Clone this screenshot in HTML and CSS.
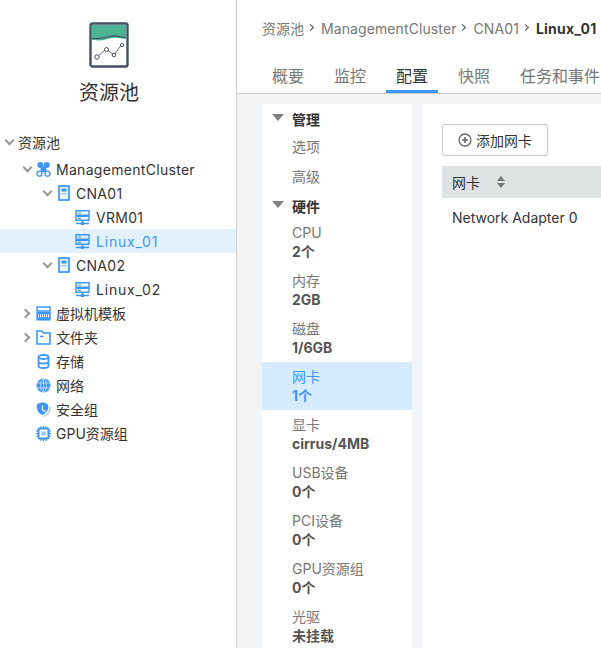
FILE: index.html
```html
<!DOCTYPE html>
<html lang="en">
<head>
  <meta charset="UTF-8">
  <title>资源池</title>
  <link rel="stylesheet" href="styles.css">
</head>
<body>
  <svg class="sprites" width="0" height="0">
    <symbol id="i-vm" viewBox="0 0 15 15"><path d="M1 .8h13v4.400H1zM1 6.300h13v3.900H1z" fill="none" stroke="#3d97fb" stroke-width="1.400"/><path d="M3 3h3M3 8.300h3" stroke="#3d97fb" stroke-width="1.200"/><path d="M7.500 10v3M1 13.500h5M9 13.500h5" stroke="#3d97fb" stroke-width="1.300" fill="none"/><rect x="6" y="12" width="3" height="3" fill="#3d97fb"/></symbol>
    <symbol id="i-host" viewBox="0 0 12 16"><rect x="1" y="1" width="10" height="14" fill="#eaf4ff" stroke="#3d97fb" stroke-width="1.700"/><rect x="3.500" y="3.500" width="5" height="3" fill="#3d97fb"/><rect x="3.500" y="8" width="5" height="1.300" fill="#9cc8f8"/></symbol>
  </svg>

  <div class="app">
    <aside class="left">
      <div class="logo">
        <svg width="40" height="46" viewBox="0 0 40 46">
          <rect x="1.500" y="1.500" width="37" height="43" rx="2" fill="#fff" stroke="#474d63" stroke-width="2.400"/>
          <path d="M3 3h34v13.500c-6 1-9-2-16 0s-10 2.500-18 1.500z" fill="#4bb394"/>
          <path d="M3 16c7 1.500 11 .5 17-1.500s10 .5 17 1" fill="none" stroke="#474d63" stroke-width="1.200"/>
          <path d="M8 35l9-8 8 6 8-11" fill="none" stroke="#6b7080" stroke-width="1"/>
          <circle cx="8" cy="35" r="2.200" fill="#fff" stroke="#474d63"/>
          <circle cx="17.500" cy="27.500" r="2" fill="#fff" stroke="#474d63"/>
          <circle cx="25" cy="33" r="1.800" fill="#fff" stroke="#474d63"/>
          <circle cx="33" cy="23" r="1.600" fill="#fff" stroke="#474d63"/>
        </svg>
        <div class="logo-title">资源池</div>
      </div>

      <ul class="tree">
        <li class="node root"><span class="caret down"></span><span>资源池</span></li>
        <li class="node lv1"><span class="caret down"></span>
          <svg class="ic" width="15" height="15" viewBox="0 0 15 15"><g fill="#3d97fb"><circle cx="4.300" cy="3" r="3"/><circle cx="10.700" cy="3" r="3"/><circle cx="7.500" cy="7.300" r="3"/></g><g fill="none" stroke="#3d97fb" stroke-width="1.300"><circle cx="3.500" cy="11.700" r="2.500"/><circle cx="11.500" cy="11.700" r="2.500"/></g></svg>
          <span class="en">ManagementCluster</span></li>
        <li class="node lv2"><span class="caret down"></span><svg class="ic" width="12" height="16"><use href="#i-host"/></svg><span class="en">CNA01</span></li>
        <li class="node lv3"><svg class="ic" width="15" height="15"><use href="#i-vm"/></svg><span class="en">VRM01</span></li>
        <li class="node lv3 selected"><svg class="ic" width="15" height="15"><use href="#i-vm"/></svg><span class="vm-name">Linux_01</span></li>
        <li class="node lv2"><span class="caret down"></span><svg class="ic" width="12" height="16"><use href="#i-host"/></svg><span class="en">CNA02</span></li>
        <li class="node lv3"><svg class="ic" width="15" height="15"><use href="#i-vm"/></svg><span class="vm-name">Linux_02</span></li>
        <li class="node lv1"><span class="caret right"></span>
          <svg class="ic" width="15" height="15" viewBox="0 0 15 15"><path d="M1 1h13v4H1z" fill="none" stroke="#3d97fb" stroke-width="1.400"/><path d="M.3 6h14.400v8.500H.3z" fill="#3d97fb"/><path d="M2 9.800h11" stroke="#fff" stroke-width="3" stroke-dasharray="1 1"/></svg>
          <span>虚拟机模板</span></li>
        <li class="node lv1"><span class="caret right"></span>
          <svg class="ic" width="15" height="15" viewBox="0 0 15 15"><path d="M1 1h5l1.500 2H14v11H1z" fill="none" stroke="#3d97fb" stroke-width="1.600"/><path d="M4 6.500h3.500" stroke="#3d97fb" stroke-width="1.500"/></svg>
          <span>文件夹</span></li>
        <li class="node lv1 leaf">
          <svg class="ic" width="15" height="15" viewBox="0 0 15 15"><g fill="none" stroke="#3d97fb" stroke-width="1.800"><ellipse cx="7.500" cy="3" rx="5" ry="2"/><path d="M2.500 3v9c0 1.200 2.200 2 5 2s5-.8 5-2V3M2.500 7.500c0 1.200 2.200 2 5 2s5-.8 5-2"/></g></svg>
          <span>存储</span></li>
        <li class="node lv1 leaf">
          <svg class="ic" width="15" height="15" viewBox="0 0 15 15"><circle cx="7.500" cy="7.500" r="7" fill="#3d97fb"/><g fill="none" stroke="#cfe5fd" stroke-width=".8"><ellipse cx="7.500" cy="7.500" rx="3" ry="6.500"/><path d="M7.500 1v13M1 5h13M1 10h13"/></g></svg>
          <span>网络</span></li>
        <li class="node lv1 leaf">
          <svg class="ic" width="15" height="15" viewBox="0 0 15 15"><path d="M6.500 .5c2.500 0 4.500 1 5.500 2.500 1 3.500-.5 7.500-5.500 10C2 11 0 7 1 2.500 2.500 1 4.500.5 6.500.5z" fill="#3d97fb"/><path d="M6.500 3.500V8l3.500 1.500" fill="none" stroke="#fff" stroke-width="1.200"/><path d="M13.800 5c.5 4-2 7.500-6 9.500" fill="none" stroke="#8fc1f9" stroke-width="1.200"/></svg>
          <span>安全组</span></li>
        <li class="node lv1 leaf">
          <svg class="ic" width="15" height="15" viewBox="0 0 15 15"><rect x="2.500" y="2.500" width="10" height="10" rx="1" fill="none" stroke="#3d97fb" stroke-width="2"/><rect x="5.500" y="5.500" width="4" height="4" fill="#8fc1f9"/><path d="M5 0v2M7.500 0v2M10 0v2M5 13v2M7.500 13v2M10 13v2M0 5h2M0 7.500h2M0 10h2M13 5h2M13 7.500h2M13 10h2" stroke="#3d97fb" stroke-width="1.200"/></svg>
          <span>GPU资源组</span></li>
      </ul>
    </aside>

    <main class="main">
      <header class="top">
        <nav class="crumbs">
          <span>资源池</span><i class="sep"></i>
          <span class="crumb-en">ManagementCluster</span><i class="sep"></i>
          <span class="crumb-en">CNA01</span><i class="sep"></i>
          <b>Linux_01</b>
        </nav>
        <div class="tabs">
          <span class="tab">概要</span>
          <span class="tab">监控</span>
          <span class="tab active">配置</span>
          <span class="tab">快照</span>
          <span class="tab">任务和事件</span>
        </div>
      </header>

      <div class="body">
        <div class="menu">
          <div class="group"><span class="tri"></span>管理</div>
          <div class="opt">选项</div>
          <div class="opt">高级</div>
          <div class="group"><span class="tri"></span>硬件</div>
          <div class="item"><div>CPU</div><b>2个</b></div>
          <div class="item"><div>内存</div><b>2GB</b></div>
          <div class="item"><div>磁盘</div><b>1/6GB</b></div>
          <div class="item on"><div>网卡</div><b>1个</b></div>
          <div class="item"><div>显卡</div><b>cirrus/4MB</b></div>
          <div class="item"><div>USB设备</div><b>0个</b></div>
          <div class="item"><div>PCI设备</div><b>0个</b></div>
          <div class="item"><div>GPU资源组</div><b>0个</b></div>
          <div class="item"><div>光驱</div><b>未挂载</b></div>
        </div>

        <section class="panel">
          <button class="add">
            <svg width="14" height="14" viewBox="0 0 14 14"><circle cx="7" cy="7" r="6" fill="none" stroke="#666" stroke-width="1.300"/><path d="M4 7h6M7 4v6" stroke="#666" stroke-width="1.500"/></svg>
            添加网卡
          </button>
          <div class="thead">网卡
            <span class="sort"><i class="up"></i><i class="dn"></i></span>
          </div>
          <div class="trow">Network Adapter 0</div>
        </section>
      </div>
    </main>
  </div>
</body>
</html>
```

FILE: styles.css
```css
html, body { margin: 0; height: 648px; overflow: hidden; background: #fff; }
body { font-family: Inter, "Noto Sans CJK SC", sans-serif; font-size: 14px; color: #333; }
ul { list-style: none; margin: 0; padding: 0; }
.sprites { position: absolute; }

.app { display: flex; height: 648px; }

/* left tree */
.left { width: 236px; flex: none; border-right: 1px solid #ccc; }
.logo { padding: 22px 18px 0 0; height: 108px; text-align: center; }
.logo svg { display: block; margin: 0 auto; }
.logo-title { font-size: 20px; line-height: 28px; margin-top: 11px; color: #333; }

.node { display: flex; align-items: center; height: 24px; }
.node .ic { flex: none; margin-right: 5px; }
.root { padding-left: 4px; margin-bottom: 3px; }
.lv1 { padding-left: 22px; }
.lv1.leaf { padding-left: 36px; }
.lv2 { padding-left: 42px; }
.lv2 .ic { margin-left: 2px; margin-right: 6px; }
.lv3 { padding-left: 75px; }
.lv3 .ic { margin-right: 6px; }
.selected { background: #e3f1fe; color: #3d97fb; }
.en { letter-spacing: .3px; }
.vm-name { letter-spacing: .8px; }

.caret { width: 7px; height: 7px; flex: none; box-sizing: border-box; border-right: 2px solid #999; border-bottom: 2px solid #999; }
.caret.down { transform: translateY(-2px) rotate(45deg); margin: 0 5px 0 2px; }
.caret.right { transform: rotate(-45deg); margin-right: 7px; }

/* main */
.main { flex: 1; min-width: 0; display: flex; flex-direction: column; }
.top { height: 93px; border-bottom: 1px solid #ccc; }
.crumbs { display: flex; align-items: center; white-space: nowrap; padding: 17px 0 0 25px; height: 22px; color: #777; }
.crumbs b { color: #333; letter-spacing: .2px; }
.crumb-en { letter-spacing: .1px; }
.sep { width: 4px; height: 4px; margin: 0 8.500px 2px 3.500px; border-top: 1px solid #555; border-right: 1px solid #555; transform: rotate(45deg); flex: none; }
.tabs { display: flex; white-space: nowrap; margin-top: 21px; padding-left: 25px; font-size: 16px; }
.tab { padding: 0 10px; margin-right: 10px; height: 33px; line-height: 32px; color: #777; box-sizing: border-box; }
.tab.active { color: #333; border-bottom: 3px solid #3d97fb; }

.body { flex: 1; display: flex; gap: 10px; padding: 10px 0 0 25px; background: #f3f4f6; overflow: hidden; }
.menu { width: 150px; flex: none; background: #fff; height: 560px; color: #777; }
.group { display: flex; align-items: center; height: 26px; padding: 1px 0 0 30px; box-sizing: border-box; position: relative; font-weight: 700; color: #333; }
.group:first-child { height: 28px; }
.tri { position: absolute; left: 10px; top: 9px; border: 6px solid transparent; border-top: 7px solid #808080; border-bottom: 0; }
.group:first-child .tri { top: 10px; }
.opt { height: 30px; line-height: 30px; padding-left: 30px; }
.item { height: 48px; padding: 5px 0 0 30px; box-sizing: border-box; line-height: 19px; }
.item b { display: block; color: #555; }
.item.on { background: #d6ebfe; color: #3d97fb; }
.item.on b { color: #3d97fb; }

.panel { flex: 1; background: #fff; padding: 20px 0 0 20px; min-width: 0; }
.add { display: flex; align-items: center; gap: 4px; justify-content: center; width: 106px; height: 32px; padding: 0; background: #fff; border: 1px solid #ccc; border-radius: 2px; font: inherit; color: #333; }
.thead { display: flex; align-items: center; margin-top: 10px; height: 32px; padding-left: 10px; background: #dfe2e2; }
.sort { display: flex; flex-direction: column; gap: 2px; margin-left: 17px; }
.sort i { width: 0; height: 0; border-left: 4px solid transparent; border-right: 4px solid transparent; }
.sort .up { border-bottom: 5px solid #777; }
.sort .dn { border-top: 5px solid #777; }
.trow { height: 40px; line-height: 40px; padding-left: 10px; }
```
